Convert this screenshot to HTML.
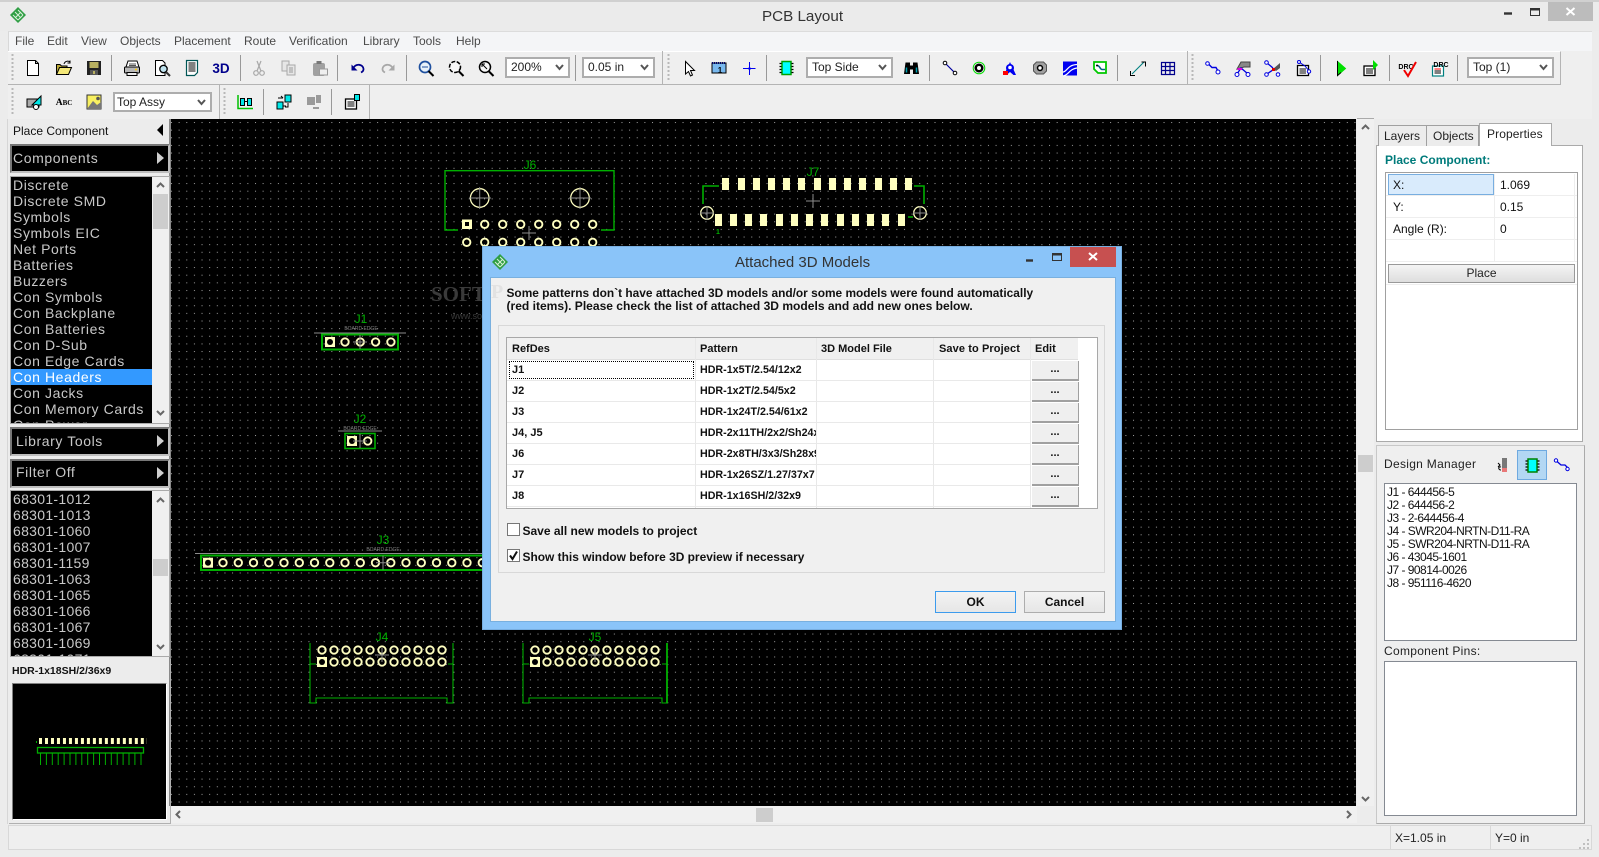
<!DOCTYPE html>
<html>
<head>
<meta charset="utf-8">
<title>PCB Layout</title>
<style>
html,body{margin:0;padding:0;background:#ececec}
#r{position:relative;width:1599px;height:857px;overflow:hidden;background:#ececec;font-family:"Liberation Sans",sans-serif;font-size:12px;color:#111}
.a{position:absolute;box-sizing:border-box}
.t{position:absolute;white-space:nowrap;line-height:14px;height:14px}
.m{color:#4a4a4a;top:34px;font-size:12px}
.c{position:absolute;background:#fff;border:2px solid #adadad;box-sizing:border-box;font-size:12px;color:#222;line-height:17px;padding-left:4px;white-space:nowrap}
.c svg{position:absolute;right:4px;top:5px}
.w{font-size:14px;letter-spacing:.6px;color:#c8c8c8;line-height:16px;height:16px;padding-left:2px;white-space:nowrap;overflow:hidden}
.n{letter-spacing:.3px}
.bb{position:absolute;left:10px;width:160px;background:#000;border:2px solid #777;border-color:#777 #bdbdbd #bdbdbd #777;box-sizing:border-box;color:#c8c8c8;font-size:14px;letter-spacing:.6px;line-height:25px;padding-left:3px}
.b{font-weight:bold;font-size:11px;color:#111}
.p{font-size:10.7px}
.eb{position:absolute;left:1032px;width:47px;height:20px;background:#efefef;border-right:1px solid #a0a0a0;border-bottom:2px solid #a0a0a0;box-sizing:border-box;text-align:center;font-weight:bold;line-height:17px;font-size:11px}
.l{position:absolute;background:#e9e9e9}
.dm{left:1387px;font-size:12px;letter-spacing:-.52px;line-height:13px;height:13px;position:absolute;white-space:nowrap;color:#111}
</style>
</head>
<body>
<div id="r">
<!-- frame -->
<div class="a" style="left:0;top:0;width:1599px;height:2px;background:#d0d0d0"></div>
<div class="a" style="left:0;top:2px;width:1599px;height:29px;background:#ebebeb"></div>
<div class="t" style="left:762px;top:8px;font-size:15.2px;color:#333;line-height:17px;height:17px">PCB Layout</div>
<div class="a" style="left:1548px;top:2px;width:45px;height:19px;background:#bcbcbc"></div>
<div class="a" style="left:8px;top:31px;width:1584px;height:20px;background:#f4f5f7;border-top:1px solid #dcdcdc;border-left:1px solid #d8d8d8"></div>
<div class="t m" style="left:15px">File</div>
<div class="t m" style="left:47px">Edit</div>
<div class="t m" style="left:81px">View</div>
<div class="t m" style="left:120px">Objects</div>
<div class="t m" style="left:174px">Placement</div>
<div class="t m" style="left:244px">Route</div>
<div class="t m" style="left:289px">Verification</div>
<div class="t m" style="left:363px">Library</div>
<div class="t m" style="left:413px">Tools</div>
<div class="t m" style="left:456px">Help</div>
<!-- toolbars bg -->
<div class="a" style="left:8px;top:51px;width:1584px;height:68px;background:#efefef"></div>
<div class="a" style="left:8px;top:51px;width:1553px;height:34px;background:#efefef;border-top:1px solid #fff;border-bottom:1px solid #b4b4b4;border-right:1px solid #b4b4b4"></div>
<div class="a" style="left:8px;top:85px;width:362px;height:34px;border-right:1px solid #b4b4b4"></div>
<div class="a" style="left:662px;top:51px;width:1px;height:34px;background:#b4b4b4"></div>
<div class="a" style="left:1187px;top:51px;width:1px;height:34px;background:#b4b4b4"></div>
<div class="a" style="left:219px;top:85px;width:1px;height:34px;background:#b4b4b4"></div>
<!-- combos -->
<div class="c" style="left:505px;top:57px;width:65px;height:21px">200%<svg width="9" height="7"><path d="M1 1L4.500 5 8 1" fill="none" stroke="#555" stroke-width="2"/></svg></div>
<div class="c" style="left:582px;top:57px;width:73px;height:21px">0.05 in<svg width="9" height="7"><path d="M1 1L4.500 5 8 1" fill="none" stroke="#555" stroke-width="2"/></svg></div>
<div class="c" style="left:806px;top:57px;width:87px;height:21px">Top Side<svg width="9" height="7"><path d="M1 1L4.500 5 8 1" fill="none" stroke="#555" stroke-width="2"/></svg></div>
<div class="c" style="left:1467px;top:57px;width:87px;height:21px">Top (1)<svg width="9" height="7"><path d="M1 1L4.500 5 8 1" fill="none" stroke="#555" stroke-width="2"/></svg></div>
<div class="c" style="left:113px;top:92px;width:99px;height:20px;line-height:16px;padding-left:2px">Top Assy<svg width="9" height="7"><path d="M1 1L4.500 5 8 1" fill="none" stroke="#555" stroke-width="2"/></svg></div>

<!-- canvas -->
<svg class="a" style="left:171px;top:119px" width="1185" height="687" viewBox="171 119 1185 687">
<defs>
<pattern id="dots" x="171" y="122" width="7.635" height="7.635" patternUnits="userSpaceOnUse"><rect width="1" height="1" fill="#a0a0a0"/></pattern>
<circle id="p" r="3.700" fill="none" stroke="#ffffc0" stroke-width="1.900"/>
<path id="x" d="M-7 0H7M0-7V7" stroke="#8c8c8c" stroke-width="1" fill="none"/>
<g id="sq"><rect x="-5" y="-5" width="10" height="10" fill="#ffffc0"/><circle r="3" fill="#000"/></g>
</defs>
<rect x="171" y="119" width="1185" height="687" fill="#000"/>
<rect x="171" y="119" width="1185" height="687" fill="url(#dots)"/>
<text x="431" y="301" font-family="Liberation Serif" font-weight="bold" font-size="21" fill="#3a3a3a">SOFTP</text>
<text x="451" y="319" font-family="Liberation Sans" font-size="9" fill="#3a3a3a">www.softpedia.com</text>
<g fill="none" stroke="#00b000">
<path d="M458 230H445V170.700H614V230H601" stroke-width="1.400"/>
<path d="M719 186H703V204M914 186H924V204M908 217H913" stroke-width="1.600"/>
<rect x="322" y="334.500" width="76" height="15" stroke-width="2"/>
<rect x="345" y="433.500" width="30" height="15" stroke-width="1.600"/>
<path d="M490 555.500H201V570H490" stroke-width="2"/>
<path d="M310 643V703H316V698H447V703H453V643M310 664H316M448 664H453" stroke-width="1.100"/>
<path d="M523 643V703H529V698H662V703H667V643M523 664H529M662 664H667" stroke-width="1.100"/>
<path d="M667 643V703" stroke-width="1.800"/>
</g>
<g font-family="Liberation Sans" font-size="12" fill="#00b000" text-anchor="middle">
<text x="530" y="169">J6</text><text x="813" y="176">J7</text><text x="361" y="323">J1</text><text x="360" y="423">J2</text><text x="383" y="544">J3</text><text x="382" y="641">J4</text><text x="595" y="641">J5</text>
<text x="718" y="234" font-size="7" font-weight="bold">1</text>
</g>
<g font-family="Liberation Sans" font-size="5" fill="#808080" text-anchor="middle">
<text x="361" y="330">BOARD EDGE</text><text x="360" y="430">BOARD EDGE</text><text x="383" y="551">BOARD EDGE</text>
</g>
<path d="M314 333H406M338 431H382M195 553.500H490" stroke="#8c8c8c" stroke-width="1" fill="none"/>
<!-- J6 -->
<g fill="none" stroke="#ffffc0" stroke-width="1.300"><circle cx="479.700" cy="198" r="9.300"/><circle cx="580" cy="198" r="9.300"/><circle cx="707" cy="213" r="6.300"/><circle cx="920" cy="213" r="6.300"/></g>
<path d="M469 198H491M479.700 187V209M569 198H591M580 187V209M700 213H714M707 206V220M913 213H927M920 206V220" stroke="#8c8c8c" stroke-width="1"/>
<rect x="462" y="219.500" width="10" height="9.500" fill="#ffffc0"/><rect x="465" y="222" width="4" height="4" fill="#000"/>
<use href="#p" x="484.700" y="224.300"/><use href="#p" x="502.700" y="224.300"/><use href="#p" x="520.700" y="224.300"/><use href="#p" x="538.700" y="224.300"/><use href="#p" x="556.700" y="224.300"/><use href="#p" x="574.700" y="224.300"/><use href="#p" x="592.700" y="224.300"/>
<use href="#p" x="466.700" y="242.300"/><use href="#p" x="484.700" y="242.300"/><use href="#p" x="502.700" y="242.300"/><use href="#p" x="520.700" y="242.300"/><use href="#p" x="538.700" y="242.300"/><use href="#p" x="556.700" y="242.300"/><use href="#p" x="574.700" y="242.300"/><use href="#p" x="592.700" y="242.300"/>
<use href="#x" x="529" y="233"/>
<!-- J7 -->
<g fill="#ffffc0">
<rect x="722" y="178" width="7" height="12"/><rect x="738" y="178" width="7" height="12"/><rect x="753" y="178" width="7" height="12"/><rect x="768" y="178" width="7" height="12"/><rect x="783" y="178" width="7" height="12"/><rect x="798" y="178" width="7" height="12"/><rect x="814" y="178" width="7" height="12"/><rect x="829" y="178" width="7" height="12"/><rect x="844" y="178" width="7" height="12"/><rect x="859" y="178" width="7" height="12"/><rect x="875" y="178" width="7" height="12"/><rect x="890" y="178" width="7" height="12"/><rect x="905" y="178" width="7" height="12"/>
<rect x="715" y="214" width="7" height="12"/><rect x="730" y="214" width="7" height="12"/><rect x="745" y="214" width="7" height="12"/><rect x="760" y="214" width="7" height="12"/><rect x="776" y="214" width="7" height="12"/><rect x="791" y="214" width="7" height="12"/><rect x="806" y="214" width="7" height="12"/><rect x="821" y="214" width="7" height="12"/><rect x="837" y="214" width="7" height="12"/><rect x="852" y="214" width="7" height="12"/><rect x="867" y="214" width="7" height="12"/><rect x="882" y="214" width="7" height="12"/><rect x="898" y="214" width="7" height="12"/>
</g>
<use href="#x" x="813" y="201"/>
<!-- J1 -->
<use href="#sq" x="330" y="342"/><use href="#p" x="345" y="342"/><use href="#p" x="360.300" y="342"/><use href="#p" x="375.600" y="342"/><use href="#p" x="390.900" y="342"/><use href="#x" x="360" y="342"/>
<!-- J2 -->
<use href="#sq" x="352" y="441"/><use href="#p" x="367.700" y="441"/><use href="#x" x="360" y="441"/>
<!-- J3 -->
<use href="#sq" x="208" y="562.700"/><use href="#p" x="223" y="562.700"/><use href="#p" x="238.300" y="562.700"/><use href="#p" x="253.500" y="562.700"/><use href="#p" x="268.800" y="562.700"/><use href="#p" x="284" y="562.700"/><use href="#p" x="299.300" y="562.700"/><use href="#p" x="314.500" y="562.700"/><use href="#p" x="329.800" y="562.700"/><use href="#p" x="345" y="562.700"/><use href="#p" x="360.300" y="562.700"/><use href="#p" x="375.500" y="562.700"/><use href="#p" x="390.800" y="562.700"/><use href="#p" x="406" y="562.700"/><use href="#p" x="421.300" y="562.700"/><use href="#p" x="436.500" y="562.700"/><use href="#p" x="451.800" y="562.700"/><use href="#p" x="467" y="562.700"/><use href="#p" x="482.300" y="562.700"/><use href="#x" x="383" y="562.700"/>
<!-- J4 -->
<use href="#p" x="322" y="650"/><use href="#p" x="334" y="650"/><use href="#p" x="346" y="650"/><use href="#p" x="358" y="650"/><use href="#p" x="370" y="650"/><use href="#p" x="382" y="650"/><use href="#p" x="394" y="650"/><use href="#p" x="406" y="650"/><use href="#p" x="418" y="650"/><use href="#p" x="430" y="650"/><use href="#p" x="442" y="650"/>
<use href="#sq" x="322" y="662"/><use href="#p" x="334" y="662"/><use href="#p" x="346" y="662"/><use href="#p" x="358" y="662"/><use href="#p" x="370" y="662"/><use href="#p" x="382" y="662"/><use href="#p" x="394" y="662"/><use href="#p" x="406" y="662"/><use href="#p" x="418" y="662"/><use href="#p" x="430" y="662"/><use href="#p" x="442" y="662"/><use href="#x" x="382" y="655"/>
<!-- J5 -->
<use href="#p" x="535" y="650"/><use href="#p" x="547" y="650"/><use href="#p" x="559" y="650"/><use href="#p" x="571" y="650"/><use href="#p" x="583" y="650"/><use href="#p" x="595" y="650"/><use href="#p" x="607" y="650"/><use href="#p" x="619" y="650"/><use href="#p" x="631" y="650"/><use href="#p" x="643" y="650"/><use href="#p" x="655" y="650"/>
<use href="#sq" x="535" y="662"/><use href="#p" x="547" y="662"/><use href="#p" x="559" y="662"/><use href="#p" x="571" y="662"/><use href="#p" x="583" y="662"/><use href="#p" x="595" y="662"/><use href="#p" x="607" y="662"/><use href="#p" x="619" y="662"/><use href="#p" x="631" y="662"/><use href="#p" x="643" y="662"/><use href="#p" x="655" y="662"/><use href="#x" x="595" y="655"/>
</svg>
<div class="a" style="left:169px;top:119px;width:2px;height:687px;background:#8a8a8a"></div>
<!-- scrollbars -->
<div class="a" style="left:1357px;top:118px;width:17px;height:688px;background:#f0f0f0;border-top:1px solid #aaa"></div>
<div class="a" style="left:1358px;top:455px;width:15px;height:17px;background:#cdcdcd"></div>
<div class="a" style="left:171px;top:806px;width:1186px;height:17px;background:#f0f0f0"></div>
<div class="a" style="left:756px;top:808px;width:17px;height:14px;background:#cdcdcd"></div>

<!-- left panel -->
<div class="a" style="left:7px;top:119px;width:1px;height:705px;background:#d6d6d6"></div>
<div class="t" style="left:13px;top:124px;font-size:12px;color:#111">Place Component</div>
<div class="bb" style="top:144px;height:29px;padding-left:1px;line-height:25px">Components</div>
<div class="a" style="left:10px;top:176px;width:160px;height:248px;background:#f0f0f0;border:1px solid #aaa"></div>
<div class="a" style="left:11px;top:177px;width:141px;height:246px;background:#000;overflow:hidden">
<div class="w">Discrete</div><div class="w">Discrete SMD</div><div class="w">Symbols</div><div class="w">Symbols EIC</div><div class="w">Net Ports</div><div class="w">Batteries</div><div class="w">Buzzers</div><div class="w">Con Symbols</div><div class="w">Con Backplane</div><div class="w">Con Batteries</div><div class="w">Con D-Sub</div><div class="w">Con Edge Cards</div><div class="w" style="background:#3399ff;color:#fff">Con Headers</div><div class="w">Con Jacks</div><div class="w">Con Memory Cards</div><div class="w">Con Power</div>
</div>
<div class="a" style="left:153px;top:194px;width:15px;height:35px;background:#cdcdcd"></div>
<div class="bb" style="top:427px;height:29px;padding-left:4px">Library Tools</div>
<div class="bb" style="top:459px;height:29px;padding-left:4px;line-height:23px">Filter Off</div>
<div class="a" style="left:10px;top:490px;width:160px;height:167px;background:#f0f0f0;border:1px solid #aaa"></div>
<div class="a" style="left:11px;top:491px;width:141px;height:165px;background:#000;overflow:hidden">
<div class="w n">68301-1012</div><div class="w n">68301-1013</div><div class="w n">68301-1060</div><div class="w n">68301-1007</div><div class="w n">68301-1159</div><div class="w n">68301-1063</div><div class="w n">68301-1065</div><div class="w n">68301-1066</div><div class="w n">68301-1067</div><div class="w n">68301-1069</div><div class="w n">68301-1071</div>
</div>
<div class="a" style="left:153px;top:559px;width:15px;height:17px;background:#cdcdcd"></div>
<div class="t b" style="left:12px;top:664px;color:#111;font-size:10.500px">HDR-1x18SH/2/36x9</div>
<div class="a" style="left:170px;top:659px;width:1px;height:165px;background:#b0b0b0"></div>
<div class="a" style="left:9px;top:823px;width:162px;height:1px;background:#b0b0b0"></div>
<div class="a" style="left:12px;top:683px;width:155px;height:137px;background:#000;border-top:1px solid #808080;border-left:1px solid #808080;border-right:1px solid #fff;border-bottom:1px solid #fff"></div>
<svg class="a" style="left:13px;top:684px" width="153" height="135" viewBox="13 684 153 135">
<path d="M36.500 741v2" stroke="#00b000"/>
<path d="M39 741H147" stroke="#ffffc0" stroke-width="6" stroke-dasharray="3 2.990"/>
<rect x="37.500" y="747.500" width="106" height="5.500" fill="none" stroke="#00b000" stroke-width="1.300"/>
<path d="M40.500 753V765M46.400 753V765M52.300 753V765M58.200 753V765M64.100 753V765M70 753V765M75.900 753V765M81.800 753V765M87.700 753V765M93.600 753V765M99.500 753V765M105.400 753V765M111.300 753V765M117.200 753V765M123.100 753V765M129 753V765M134.900 753V765M141 753V765" stroke="#00b000" stroke-width="1"/>
</svg>

<!-- right panel -->
<div class="a" style="left:1376px;top:145px;width:207px;height:297px;background:#fff;border:1px solid #aaa"></div>
<div class="a" style="left:1378px;top:125px;width:49px;height:21px;background:#ececec;border:1px solid #a0a0a0;border-bottom:0"></div>
<div class="a" style="left:1427px;top:125px;width:52px;height:21px;background:#ececec;border:1px solid #a0a0a0;border-bottom:0;border-left:0"></div>
<div class="a" style="left:1479px;top:123px;width:73px;height:23px;background:#fff;border:1px solid #aaa;border-bottom:0"></div>
<div class="t" style="left:1384px;top:129px;color:#222">Layers</div>
<div class="t" style="left:1433px;top:129px;color:#222">Objects</div>
<div class="t" style="left:1487px;top:127px;color:#222;letter-spacing:.1px">Properties</div>
<div class="t" style="left:1385px;top:153px;color:#007b7b;font-weight:bold">Place Component:</div>
<div class="a" style="left:1385px;top:172px;width:193px;height:258px;border:1px solid #a0a0a0;background:#fff"></div>
<div class="a" style="left:1388px;top:174px;width:106px;height:21px;background:#d9ebfc;border:1px solid #78aee0"></div>
<div class="a" style="left:1386px;top:195px;width:191px;height:1px;background:#eee"></div>
<div class="a" style="left:1386px;top:217px;width:191px;height:1px;background:#eee"></div>
<div class="a" style="left:1386px;top:239px;width:191px;height:1px;background:#eee"></div>
<div class="a" style="left:1386px;top:261px;width:191px;height:1px;background:#eee"></div>
<div class="a" style="left:1386px;top:284px;width:191px;height:1px;background:#eee"></div>
<div class="a" style="left:1494px;top:174px;width:1px;height:87px;background:#eee"></div>
<div class="a" style="left:1574px;top:174px;width:1px;height:87px;background:#eee"></div>
<div class="t" style="left:1393px;top:178px">X:</div>
<div class="t" style="left:1393px;top:200px">Y:</div>
<div class="t" style="left:1393px;top:222px">Angle (R):</div>
<div class="t" style="left:1500px;top:178px">1.069</div>
<div class="t" style="left:1500px;top:200px">0.15</div>
<div class="t" style="left:1500px;top:222px">0</div>
<div class="a" style="left:1388px;top:264px;width:187px;height:19px;border:1px solid #999;background:linear-gradient(#f4f4f4,#dedede);text-align:center;line-height:17px;color:#222">Place</div>
<!-- design manager -->
<div class="a" style="left:1376px;top:445px;width:209px;height:379px;background:#efefef;border:1px solid #c8c8c8;border-right-color:#aaa;border-bottom-color:#aaa"></div>
<div class="t" style="left:1384px;top:457px;color:#222;letter-spacing:.3px">Design Manager</div>
<div class="a" style="left:1517px;top:450px;width:30px;height:30px;background:#b3d7f3;border:1px solid #6ea9e0"></div>
<div class="a" style="left:1384px;top:483px;width:193px;height:158px;background:#fff;border:1px solid #858a92"></div>
<div class="dm" style="top:486px">J1 - 644456-5</div>
<div class="dm" style="top:499px">J2 - 644456-2</div>
<div class="dm" style="top:512px">J3 - 2-644456-4</div>
<div class="dm" style="top:525px">J4 - SWR204-NRTN-D11-RA</div>
<div class="dm" style="top:538px">J5 - SWR204-NRTN-D11-RA</div>
<div class="dm" style="top:551px">J6 - 43045-1601</div>
<div class="dm" style="top:564px">J7 - 90814-0026</div>
<div class="dm" style="top:577px">J8 - 951116-4620</div>
<div class="t" style="left:1384px;top:644px;color:#222;letter-spacing:.3px">Component Pins:</div>
<div class="a" style="left:1384px;top:661px;width:193px;height:155px;background:#fff;border:1px solid #858a92"></div>
<!-- status bar -->
<div class="a" style="left:8px;top:825px;width:1584px;height:25px;background:#efefef;border-top:1px solid #d8d8d8;border-bottom:1px solid #d8d8d8;border-left:1px solid #d8d8d8;border-right:1px solid #d8d8d8"></div>
<div class="a" style="left:1390px;top:826px;width:1px;height:23px;background:#d8d8d8"></div>
<div class="a" style="left:1490px;top:826px;width:1px;height:23px;background:#d8d8d8"></div>
<div class="t" style="left:1395px;top:831px;color:#222">X=1.05 in</div>
<div class="t" style="left:1495px;top:831px;color:#222">Y=0 in</div>

<!-- icons overlay -->
<svg class="a" style="left:0;top:0" width="1599" height="857" viewBox="0 0 1599 857" font-family="Liberation Sans">
<defs>
<g id="logo"><path d="M0-8L8 0 0 8-8 0Z" fill="#2f9e44"/><path d="M-3-3L3 3M0-5L5 0M-5 0L0 5M3-3L-3 3M5 0L0 5" stroke="#d8f0d8" stroke-width="1"/></g>
</defs>
<use href="#logo" x="18" y="15"/>
<!-- window buttons -->
<path d="M1504 13.500H1512" stroke="#333" stroke-width="2.400"/>
<rect x="1530.500" y="8.500" width="9" height="7" fill="none" stroke="#333"/><path d="M1530 9.500H1540" stroke="#333" stroke-width="2"/>
<path d="M1566.500 8L1574.500 15M1574.500 8L1566.500 15" stroke="#fff" stroke-width="2"/>
<!-- grips -->
<path d="M12.500 54V81M668.500 54V81M1192.500 54V81M12.500 88V116M224.500 88V116" stroke="#b8b8b8" stroke-width="2" stroke-dasharray="2 2"/>
<!-- seps -->
<path d="M111.500 55V81M240.500 55V81M337.500 55V81M406.500 55V81M575.500 55V81M766.500 55V81M929.500 55V81M1117.500 55V81M1320.500 55V81M1389.500 55V81M1457.500 55V81M263.500 89V115M331.500 89V115" stroke="#999"/>
<!-- new -->
<g transform="translate(33,68)"><path d="M-5.500-7.500H2.500L5.500-4.500V7.500H-5.500Z" fill="#fff" stroke="#000"/><path d="M2.500-7.500V-4.500H5.500" fill="none" stroke="#000"/></g>
<!-- open -->
<g transform="translate(64,68)"><path d="M-7.500 6.500V-3.500H-4L-2.500-2H3V0" fill="#b9a838" stroke="#000"/><path d="M-7.500 6.500L-4.500-.500H7.500L4.500 6.500Z" fill="#f4e878" stroke="#000"/><path d="M0-4C1-7 4-7.500 6-6M6-7.500V-5H3.500" fill="none" stroke="#000"/></g>
<!-- save -->
<g transform="translate(94,68)"><rect x="-7" y="-7" width="14" height="14" fill="#222"/><rect x="-4.500" y="-6" width="9" height="6" fill="#b8b060"/><rect x="-4" y="2" width="8" height="5" fill="#555"/><rect x="-1" y="3" width="2" height="3" fill="#b8b060"/></g>
<!-- print -->
<g transform="translate(132,68)"><path d="M-4-7H5L7-1H-6Z" fill="#fff" stroke="#000"/><rect x="-7.500" y="-1" width="15" height="6" rx="1" fill="#b8b8b8" stroke="#000"/><rect x="-5" y="4.500" width="10" height="3" fill="#eee" stroke="#000"/><path d="M-3-4H4M-3-2.500H4" stroke="#555"/><circle cx="4" cy="1.500" r="1" fill="#fc0"/></g>
<!-- preview -->
<g transform="translate(162,68)"><path d="M-6.500-7.500H.5L3-5V7.500H-6.500Z" fill="#fff" stroke="#000"/><circle cx="1.500" cy="1" r="3.700" fill="#bfe3ef" stroke="#000" stroke-width="1.300"/><path d="M4 4L8 8" stroke="#333" stroke-width="2"/></g>
<!-- doc -->
<g transform="translate(192,68)"><path d="M-5.500-7.500H5.500V4.500L2.500 7.500H-5.500Z" fill="#fff" stroke="#005555" stroke-width="1.200"/><path d="M-3.500-5H3.500M-3.500-3H3.500M-3.500-1H3.500M-3.500 1H3.500M-3.500 3H3.500" stroke="#000"/></g>
<text x="221" y="73" font-size="13.500" font-weight="bold" fill="#00008c" text-anchor="middle">3D</text>
<!-- cut -->
<g transform="translate(259,68)" fill="none" stroke="#a8a8a8" stroke-width="1.200"><circle cx="-3" cy="5" r="2.300"/><circle cx="3" cy="5" r="2.300"/><path d="M-2 3L2-7M2 3L-2-7"/></g>
<!-- copy -->
<g transform="translate(289,68)" fill="#e6e6e6" stroke="#a8a8a8"><path d="M-7-7H0V3H-7Z"/><path d="M-2-3H6V7H-2Z"/><path d="M0 0H4M0 2H4M0 4H4" stroke="#999"/></g>
<!-- paste -->
<g transform="translate(320,68)"><rect x="-7" y="-5" width="12" height="13" rx="2" fill="#a0a0a0"/><rect x="-3.500" y="-7" width="5" height="3" fill="#777"/><rect x="-.5" y="1" width="8" height="6" fill="#efefef" stroke="#999"/></g>
<!-- undo -->
<path d="M353 68.500C356 63 363 64 363.500 69C363.700 71 362 72 361 72.500" fill="none" stroke="#00008c" stroke-width="1.800"/><path d="M351.500 64.500V70.500H357.500Z" fill="#00008c"/>
<path d="M393 68.500C390 63 383 64 382.500 69C382.300 71 384 72 385 72.500" fill="none" stroke="#a8a8a8" stroke-width="1.800"/><path d="M394.500 64.500V70.500H388.500Z" fill="#a8a8a8"/>
<!-- zoom icons -->
<g transform="translate(425,67)" fill="none"><circle r="5.500" stroke="#1e4f9e" stroke-width="1.700" fill="#e8f2fa"/><path d="M-3 0H3" stroke="#1e4f9e"/><path d="M3.500 4L8.500 9" stroke="#000" stroke-width="2"/></g>
<g transform="translate(455,67)" fill="none"><circle r="5.500" stroke="#000" stroke-width="1.500" stroke-dasharray="4 1.500" fill="#f8f8f8"/><path d="M3.500 4L8.500 9" stroke="#000" stroke-width="2"/></g>
<g transform="translate(485,67)" fill="none"><circle r="5.500" stroke="#000" stroke-width="1.500" fill="#f8f8f8"/><path d="M-3-3L2 2M-3-3V0M-3-3H0" stroke="#000"/><path d="M3.500 4L8.500 9" stroke="#000" stroke-width="2"/></g>
<!-- cursor -->
<path d="M685.500 61.500V74L688.500 71.500L690.500 76L692.500 75L690.500 70.500H694.500Z" fill="#fff" stroke="#000"/>
<!-- ruler -->
<g transform="translate(719,68)"><rect x="-7" y="-5" width="14" height="10" fill="#78b8ee" stroke="#000"/><path d="M-7-5H7" stroke="#00006a" stroke-width="2" stroke-dasharray="1 1"/></g><text x="720" y="73" font-size="8" font-weight="bold" fill="#000" text-anchor="middle">1</text>
<!-- cross -->
<path d="M743 68.500H755.500M749.500 62V75" stroke="#0000f0" stroke-width="1"/><circle cx="749.500" cy="68.500" r="1.300" fill="#0000f0"/>
<!-- chip -->
<g transform="translate(786.500,68)"><rect x="-4.500" y="-6.500" width="9" height="13" fill="#00ffff" stroke="#00a000" stroke-width="1.500"/><path d="M-7-4.500H-5M-7-1.500H-5M-7 1.500H-5M-7 4.500H-5M5-4.500H7M5-1.500H7M5 1.500H7M5 4.500H7" stroke="#000" stroke-width="1.300"/></g>
<!-- binoculars -->
<g transform="translate(911.500,67.500)"><path d="M-7.500 6.500L-6-5H-1.500V6.500Z" fill="#000"/><path d="M7.500 6.500L6-5H1.500V6.500Z" fill="#000"/><rect x="-2" y="-2" width="4" height="4" fill="#000"/><path d="M-5 0V5M5 0V5" stroke="#00a0b0" stroke-width="1.500"/></g>
<!-- line -->
<path d="M945 63L955 73" stroke="#00009c" stroke-width="1.200"/><circle cx="945" cy="63" r="1.800" fill="#fff" stroke="#000"/><circle cx="955" cy="73" r="1.800" fill="#fff" stroke="#000"/>
<!-- via -->
<circle cx="979" cy="68" r="5.800" fill="none" stroke="#00e000"/><circle cx="979" cy="68" r="4.500" fill="#000"/><circle cx="979" cy="68" r="2" fill="#fff"/>
<!-- arc -->
<path d="M1004 75L1010 62L1016 75H1013.500L1010 72L1006.500 75Z" fill="#0000f0"/><circle cx="1010" cy="68" r="4" fill="#0000f0"/><path d="M1003 71H1008V75H1003Z" fill="#f00"/><circle cx="1010" cy="67.500" r="1.800" fill="#fff"/>
<!-- hole -->
<path d="M1036.500 62H1043.500L1046.500 65V71L1043.500 74H1036.500L1033.500 71V65Z" fill="#a0a0a0" stroke="#555"/><circle cx="1040" cy="68" r="3.200" fill="#000"/><circle cx="1040" cy="68" r="1.700" fill="#fff"/>
<!-- copper -->
<rect x="1063" y="61.500" width="14" height="14" fill="#0000f0"/><path d="M1063 72C1067 72 1067 65 1077 64.500M1063 76C1069 75 1069 69 1077 68" stroke="#fff" stroke-width="1.200" fill="none"/>
<!-- board -->
<path d="M1094 62H1106V73H1098L1094 69Z" fill="#fff" stroke="#00c800" stroke-width="1.800"/><path d="M1097 65.500C1100 65.500 1100 69.500 1102 69.500H1105" stroke="#006080" stroke-width="1.500" fill="none"/><circle cx="1097" cy="65.500" r="1" fill="#000"/>
<!-- measure -->
<path d="M1132 74L1144 62" stroke="#008080" stroke-width="1.100"/><path d="M1130.500 71V75.500H1135M1141.500 62H1145.500V66.500" stroke="#000" stroke-width="1" fill="none"/>
<!-- grid -->
<path d="M1161.500 62.500H1174.500V74.500H1161.500ZM1161.500 66.500H1174.500M1161.500 70.500H1174.500M1165.500 62.500V74.500M1170 62.500V74.500" fill="none" stroke="#00008c" stroke-width="1.200"/>
<!-- route -->
<path d="M1208 63.500L1212 67.500H1216L1218 71" fill="none" stroke="#0000e0" stroke-width="1.400"/><circle cx="1207.500" cy="63.500" r="1.800" fill="#fff" stroke="#0000e0"/><circle cx="1218" cy="72" r="2" fill="#fff" stroke="#0000e0"/>
<!-- route2 -->
<path d="M1237 69L1241 62H1250V67H1244Z" fill="#888" stroke="#444"/><path d="M1237 74L1241 68L1248 74" fill="none" stroke="#0000e0" stroke-width="1.300"/><circle cx="1237" cy="74.500" r="2" fill="#fff" stroke="#0000e0"/><circle cx="1248" cy="74.500" r="2" fill="#fff" stroke="#0000e0"/><path d="M1237.500 69H1242" stroke="#e000e0" stroke-width="2"/>
<!-- cut route -->
<path d="M1267 74L1277 67M1267 63L1273 68" stroke="#0000e0" stroke-width="1.300"/><circle cx="1266.500" cy="62.500" r="1.800" fill="#fff" stroke="#0000e0"/><circle cx="1266.500" cy="74.500" r="1.800" fill="#fff" stroke="#0000e0"/><circle cx="1278" cy="74.500" r="1.800" fill="#fff" stroke="#0000e0"/><path d="M1273 69L1280 63V68L1276 71Z" fill="#555"/><rect x="1272" y="68" width="3" height="3" fill="#e00000"/>
<!-- route report -->
<rect x="1297.500" y="65.500" width="11" height="10" fill="#fff" stroke="#000" stroke-width="1.300"/><path d="M1299.500 69H1306M1299.500 71H1306M1299.500 73H1306" stroke="#000"/><path d="M1299 62L1305 66L1309 71" fill="none" stroke="#0000e0"/><circle cx="1299" cy="62" r="1.500" fill="#fff" stroke="#0000e0"/><circle cx="1309" cy="71.500" r="1.700" fill="#fff" stroke="#0000e0"/>
<!-- play -->
<path d="M1337.500 61.500L1345.500 68.500L1337.500 75.500Z" fill="#00e000" stroke="#00e000"/><path d="M1337.500 61V75.500L1341 72.500" fill="none" stroke="#000"/>
<!-- report -->
<rect x="1364" y="66" width="11" height="9.500" fill="#fff" stroke="#000" stroke-width="1.300"/><path d="M1366 69H1373M1366 71H1373M1366 73H1373" stroke="#000"/><path d="M1373 60V70L1378 65Z" fill="#00e000"/>
<!-- DRC -->
<text x="1406" y="69" font-size="7" font-weight="bold" fill="#000" text-anchor="middle">DRC</text>
<path d="M1404 70L1408 76L1416 62" fill="none" stroke="#f00000" stroke-width="2"/>
<rect x="1432.500" y="66" width="11" height="10" fill="#fff" stroke="#008080" stroke-width="1.200"/><path d="M1434.500 69H1441" stroke="#f00"/><path d="M1434.500 71H1441M1434.500 73H1441" stroke="#000"/>
<text x="1441" y="67" font-size="7" font-weight="bold" fill="#000" text-anchor="middle">DRC</text>
<!-- toolbar2 -->
<g transform="translate(34,102)"><path d="M-7-3H5V5H-7Z" fill="#aaa" stroke="#000"/><path d="M-2 3L7-6V3Z" fill="#00e8e8" stroke="#000"/><circle cx="2" cy="5" r="2.500" fill="#fff" stroke="#000"/></g>
<text x="64" y="105" font-size="9.500" font-family="Liberation Serif" font-weight="bold" fill="#000" text-anchor="middle" style="font-variant:small-caps">Abc</text>
<g transform="translate(94,102)"><rect x="-7" y="-7" width="14" height="14" fill="#f8f060" stroke="#333"/><path d="M-7 7L-1-1L3 3L7 0V7Z" fill="#777"/><circle cx="4" cy="-3.500" r="1.800" fill="#555"/></g>
<g transform="translate(245.500,102)"><path d="M-7.500-7V6.500H7.500" fill="none" stroke="#00c000" stroke-width="1.500"/><rect x="-5" y="-3.500" width="4" height="7" fill="#00e8e8" stroke="#000"/><rect x="2" y="-3.500" width="4" height="7" fill="#00e8e8" stroke="#000"/><path d="M-1-0.500H2" stroke="#000"/></g>
<g transform="translate(284,102)"><rect x="-7" y="0" width="6" height="7" fill="#00e8e8" stroke="#000"/><rect x="1" y="-7" width="6" height="7" fill="#00e8e8" stroke="#000"/><path d="M-6-4H-1M-1-4L-3-6M2 4H-1" stroke="#000" fill="none"/><path d="M4 1V5H1" stroke="#000" fill="none"/></g>
<g transform="translate(314,102)" fill="#9a9a9a"><rect x="-7" y="-5" width="8" height="8"/><rect x="2" y="-7" width="5" height="8"/><path d="M-1 5H5V7H-1Z"/></g>
<g transform="translate(352,102)"><rect x="-6.500" y="-3" width="11" height="10" fill="#fff" stroke="#000" stroke-width="1.300"/><path d="M-4.500 0H2.500M-4.500 2H2.500M-4.500 4H2.500" stroke="#000"/><rect x="2.500" y="-7.500" width="5" height="6" fill="#00e8e8" stroke="#000"/></g>
<!-- panel arrows -->
<path d="M163 124V136L157 130Z" fill="#000"/>
<path d="M157 152V164L164 158Z" fill="#cfcfcf"/>
<path d="M157 435V447L164 441Z" fill="#cfcfcf"/>
<path d="M157 467V479L164 473Z" fill="#cfcfcf"/>
<path d="M157 187L160.500 183.500 164 187M157 411L160.500 414.500 164 411M157 502L160.500 498.500 164 502M157 645L160.500 648.500 164 645M1362 129L1365.500 125.500 1369 129M1362 797L1365.500 800.500 1369 797" fill="none" stroke="#666" stroke-width="2"/>
<path d="M180 811L176.500 814.500 180 818M1347 811L1350.500 814.500 1347 818" fill="none" stroke="#666" stroke-width="2"/>
<!-- design manager icons -->
<g transform="translate(1502,465)"><path d="M0-6H5M0-4H5M0-2H5M0 0H5M0 2H5" stroke="#000"/><path d="M0 4H5M0 6H5" stroke="#e00000"/><path d="M-1 2C-4 1-4 5-1 5" fill="none" stroke="#000"/><path d="M-3-1L-1 1-3 3" fill="none" stroke="#000" transform="translate(-1,-1)"/></g>
<g transform="translate(1532.500,465.500)"><rect x="-4.500" y="-6.500" width="9" height="13" fill="#00ffff" stroke="#008000" stroke-width="1.500"/><path d="M-7-4.500H-5M-7-1.500H-5M-7 1.500H-5M-7 4.500H-5M5-4.500H7M5-1.500H7M5 1.500H7M5 4.500H7" stroke="#000" stroke-width="1.300"/></g>
<path d="M1556.500 461L1561 465H1565L1568 468" fill="none" stroke="#0000e0" stroke-width="1.300"/><circle cx="1556" cy="460.500" r="1.700" fill="#fff" stroke="#0000e0"/><circle cx="1567.500" cy="469" r="1.700" fill="#fff" stroke="#0000e0"/>
<path d="M1579 847h2v2h-2zM1583 847h2v2h-2zM1587 847h2v2h-2zM1583 843h2v2h-2zM1587 843h2v2h-2zM1587 839h2v2h-2z" fill="#c0c0c0"/>
</svg>

<!-- dialog -->
<div class="a" style="left:482px;top:246px;width:640px;height:384px;background:#8ac4f9;border:1px solid #78aee0"></div>
<div class="a" style="left:1070px;top:247px;width:46px;height:20px;background:#c75050"></div>
<div class="t" style="left:735px;top:254px;font-size:15px;color:#333;line-height:17px;height:17px">Attached 3D Models</div>
<div class="a" style="left:490px;top:277px;width:626px;height:345px;background:#f0f0f0;border:1px solid #79b0df"></div>
<div class="t" style="left:491px;top:285px;font-family:'Liberation Serif';font-size:20px;color:#e2e2e2;font-weight:bold;line-height:14px">P</div>
<div class="t" style="left:506.500px;top:286px;font-weight:bold;font-size:11.900px;color:#111">Some patterns don`t have attached 3D models and/or some models were found automatically</div>
<div class="t" style="left:506.500px;top:299px;font-weight:bold;font-size:12.050px;color:#111">(red items). Please check the list of attached 3D models and add new ones below.</div>
<div class="a" style="left:498px;top:325px;width:607px;height:248px;border:1px solid #d8d8d8"></div>
<div class="a" style="left:506px;top:337px;width:592px;height:172px;background:#fff;border:1px solid #a8a8a8"></div>
<div class="a" style="left:507px;top:338px;width:571px;height:21px;background:#f0f0f0"></div>
<div class="a" style="left:507px;top:359px;width:571px;height:1px;background:#e0e0e0"></div>
<div class="a" style="left:695px;top:338px;width:1px;height:170px;background:#e8e8e8"></div>
<div class="a" style="left:816px;top:338px;width:1px;height:170px;background:#e8e8e8"></div>
<div class="a" style="left:933px;top:338px;width:1px;height:170px;background:#e8e8e8"></div>
<div class="a" style="left:1030px;top:338px;width:1px;height:170px;background:#e8e8e8"></div>
<div class="l" style="left:507px;top:380px;width:523px;height:1px"></div>
<div class="l" style="left:507px;top:401px;width:523px;height:1px"></div>
<div class="l" style="left:507px;top:422px;width:523px;height:1px"></div>
<div class="l" style="left:507px;top:443px;width:523px;height:1px"></div>
<div class="l" style="left:507px;top:464px;width:523px;height:1px"></div>
<div class="l" style="left:507px;top:485px;width:523px;height:1px"></div>
<div class="l" style="left:507px;top:506px;width:523px;height:1px"></div>
<div class="t b" style="left:512px;top:342px">RefDes</div>
<div class="t b" style="left:700px;top:342px">Pattern</div>
<div class="t b" style="left:821px;top:342px">3D Model File</div>
<div class="t b" style="left:939px;top:342px;letter-spacing:.1px">Save to Project</div>
<div class="t b" style="left:1035px;top:342px">Edit</div>
<div class="a" style="left:509px;top:361px;width:185px;height:18px;border:1px dotted #000"></div>
<div class="t b" style="left:512px;top:363px">J1</div>
<div class="t b" style="left:512px;top:384px">J2</div>
<div class="t b" style="left:512px;top:405px">J3</div>
<div class="t b" style="left:512px;top:426px">J4, J5</div>
<div class="t b" style="left:512px;top:447px">J6</div>
<div class="t b" style="left:512px;top:468px">J7</div>
<div class="t b" style="left:512px;top:489px">J8</div>
<div class="t b p" style="left:700px;top:363px;width:116px;overflow:hidden">HDR-1x5T/2.54/12x2</div>
<div class="t b p" style="left:700px;top:384px;width:116px;overflow:hidden">HDR-1x2T/2.54/5x2</div>
<div class="t b p" style="left:700px;top:405px;width:116px;overflow:hidden">HDR-1x24T/2.54/61x2</div>
<div class="t b p" style="left:700px;top:426px;width:116px;overflow:hidden">HDR-2x11TH/2x2/Sh24x8</div>
<div class="t b p" style="left:700px;top:447px;width:116px;overflow:hidden">HDR-2x8TH/3x3/Sh28x9</div>
<div class="t b p" style="left:700px;top:468px;width:116px;overflow:hidden">HDR-1x26SZ/1.27/37x7</div>
<div class="t b p" style="left:700px;top:489px;width:116px;overflow:hidden">HDR-1x16SH/2/32x9</div>
<div class="eb" style="top:361px">...</div>
<div class="eb" style="top:382px">...</div>
<div class="eb" style="top:403px">...</div>
<div class="eb" style="top:424px">...</div>
<div class="eb" style="top:445px">...</div>
<div class="eb" style="top:466px">...</div>
<div class="eb" style="top:487px">...</div>
<div class="a" style="left:507px;top:523px;width:13px;height:13px;background:#fff;border:1px solid #777"></div>
<div class="t b" style="left:522.500px;top:524px;font-size:12px">Save all new models to project</div>
<div class="a" style="left:507px;top:549px;width:13px;height:13px;background:#fff;border:1px solid #777"></div>
<svg class="a" style="left:507px;top:549px" width="13" height="13"><path d="M3 6.500L5.500 10L10 2.500" fill="none" stroke="#111" stroke-width="2"/></svg>
<div class="t b" style="left:522.500px;top:550px;font-size:11.950px">Show this window before 3D preview if necessary</div>
<div class="a" style="left:935px;top:591px;width:81px;height:22px;border:1px solid #3c9bed;background:linear-gradient(#f3f3f3,#e6e6e6);text-align:center;line-height:20px;font-weight:bold;color:#111">OK</div>
<div class="a" style="left:1024px;top:591px;width:81px;height:22px;border:1px solid #adadad;background:linear-gradient(#f3f3f3,#e6e6e6);text-align:center;line-height:20px;font-weight:bold;color:#111">Cancel</div>
<svg class="a" style="left:482px;top:246px" width="640" height="31" viewBox="482 246 640 31">
<g transform="translate(500,262)"><path d="M0-8L8 0 0 8-8 0Z" fill="#2f9e44"/><path d="M-3-3L3 3M0-5L5 0M-5 0L0 5M3-3L-3 3M5 0L0 5" stroke="#d8f0d8" stroke-width="1"/></g>
<path d="M1026 260.500H1033" stroke="#333" stroke-width="2.400"/>
<rect x="1052.500" y="253.500" width="9" height="7" fill="none" stroke="#333"/><path d="M1052 254.500H1062" stroke="#333" stroke-width="2"/>
<path d="M1089 253L1097 260M1097 253L1089 260" stroke="#fff" stroke-width="2"/>
</svg>
</div>
</body>
</html>
